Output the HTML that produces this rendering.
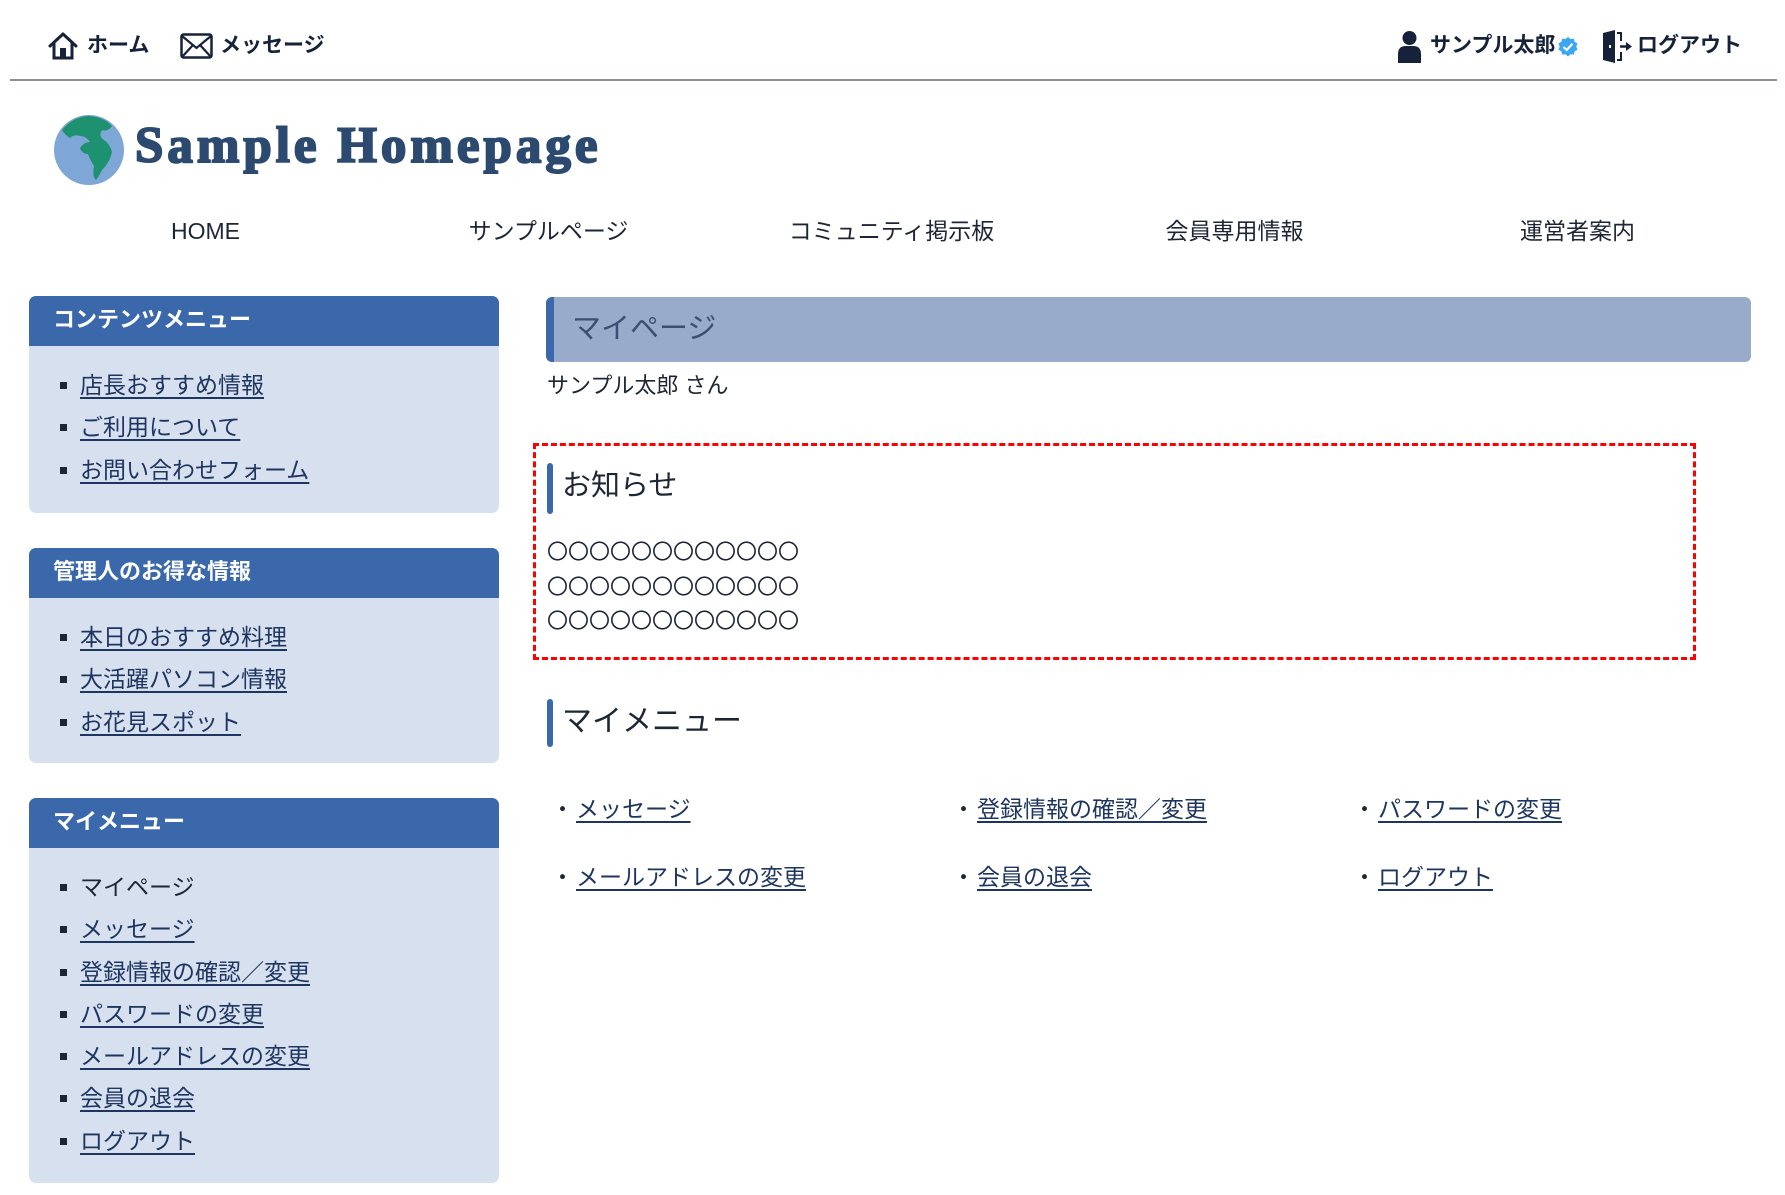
<!DOCTYPE html>
<html><head><meta charset="utf-8"><style>
*{margin:0;padding:0;box-sizing:border-box}
body{width:1785px;height:1195px;background:#fff;position:relative;overflow:hidden;font-family:"Liberation Sans","Noto Sans CJK JP",sans-serif;color:#1e2535}
.a{position:absolute;white-space:nowrap}
.tn{font-size:21px;font-weight:bold;color:#16213a;line-height:24px}
.nav{top:216px;font-size:23px;line-height:30px;width:343px;text-align:center;color:#1e2535}
.box{position:absolute;left:29px;width:470px;background:#d6e0ee;border-radius:7px;overflow:hidden}
.box .h{background:#3a68ab;color:#fff;font-weight:bold;font-size:22px;height:50px;line-height:48px;padding-left:24px}
.box ul{list-style:none;padding-top:18px}
.box li{position:relative;height:42.3px;line-height:42px;font-size:23px;padding-left:51px}
.box li:before{content:"";position:absolute;left:31px;top:18px;width:7px;height:7px;background:#1e2535}
a,.lk{color:#1e3560;text-decoration:underline;text-underline-offset:4px;text-decoration-thickness:1.5px}
.ml{font-size:23px;line-height:30px}
.ml span.d{margin-right:2px;color:#1e2535;text-decoration:none}
</style></head><body>
<svg class="a" style="left:47px;top:31px" width="32" height="30" viewBox="0 0 32 30"><path d="M3 15 L16 3 L29 15" fill="none" stroke="#16213a" stroke-width="3" stroke-linejoin="round" stroke-linecap="round"/><path d="M7 12 V27 H25 V12" fill="none" stroke="#16213a" stroke-width="3"/><rect x="13" y="17" width="6" height="10" fill="#16213a"/></svg>
<div class="a tn" style="left:87px;top:34px">ホーム</div>
<svg class="a" style="left:180px;top:33px" width="33" height="26" viewBox="0 0 33 26"><rect x="1.5" y="1.5" width="30" height="23" rx="2" fill="none" stroke="#16213a" stroke-width="2.5"/><path d="M2 3 L16.5 15 L31 3 M2 24 L13 12 M31 24 L20 12" fill="none" stroke="#16213a" stroke-width="2.2"/></svg>
<div class="a tn" style="left:220px;top:34px">メッセージ</div>
<svg class="a" style="left:1397px;top:30px" width="25" height="33" viewBox="0 0 25 33"><circle cx="12.5" cy="8" r="7" fill="#16213a"/><path d="M1 33 V24 Q1 16 9 16 H16 Q24 16 24 24 V33 Z" fill="#16213a"/></svg>
<div class="a tn" style="left:1430px;top:34px">サンプル太郎</div>
<svg class="a" style="left:1557px;top:36px" width="22" height="22" viewBox="0 0 22 22"><path d="M11 1 L13.5 3 L16.8 2.6 L17.6 5.8 L20.5 7.5 L19.3 10.6 L20.5 13.8 L17.6 15.4 L16.8 18.6 L13.5 18.2 L11 20.5 L8.5 18.2 L5.2 18.6 L4.4 15.4 L1.5 13.8 L2.7 10.6 L1.5 7.5 L4.4 5.8 L5.2 2.6 L8.5 3 Z" fill="#3aa7f0"/><path d="M6.5 11 L9.7 14 L15.5 7.8" fill="none" stroke="#fff" stroke-width="2.2"/></svg>
<svg class="a" style="left:1602px;top:30px" width="32" height="33" viewBox="0 0 32 33"><path d="M1 3 L13 0 V33 L1 30 Z" fill="#16213a"/><rect x="7" y="15" width="2" height="3" fill="#fff"/><path d="M15 3 H19 V11 M15 30 H19 V22" fill="none" stroke="#16213a" stroke-width="2"/><path d="M18 16.5 H25" stroke="#16213a" stroke-width="2.5"/><path d="M24 12 L30 16.5 L24 21 Z" fill="#16213a"/></svg>
<div class="a tn" style="left:1637px;top:34px">ログアウト</div>
<div class="a" style="left:10px;top:79px;width:1767px;height:2px;background:#8a909b"></div>
<svg class="a" style="left:52px;top:114px" width="74" height="72" viewBox="0 0 74 72"><ellipse cx="37" cy="36" rx="35" ry="35" fill="#7ea6d6"/><path d="M10 16 Q22 2 37 2 Q52 3 60 12 Q56 18 50 16 Q46 22 52 26 Q58 30 60 38 Q58 48 50 56 Q46 64 44 66 Q40 62 42 52 Q38 46 36 40 Q30 40 28 34 Q32 28 38 28 Q34 22 28 22 Q22 20 18 24 Q14 22 10 16 Z" fill="#1e9170"/></svg>
<div class="a" style="left:135px;top:116px;font-family:'Liberation Serif',serif;font-weight:bold;font-size:51px;line-height:60px;color:#2c4a70;letter-spacing:4px;-webkit-text-stroke:2px #2c4a70">Sample Homepage</div>
<div class="a nav" style="left:34px">HOME</div>
<div class="a nav" style="left:377px">サンプルページ</div>
<div class="a nav" style="left:720px">コミュニティ掲示板</div>
<div class="a nav" style="left:1063px">会員専用情報</div>
<div class="a nav" style="left:1406px">運営者案内</div>
<div class="box" style="top:296px;height:217px"><div class="h">コンテンツメニュー</div><ul>
<li><span class="lk">店長おすすめ情報</span></li><li><span class="lk">ご利用について</span></li><li><span class="lk">お問い合わせフォーム</span></li></ul></div>
<div class="box" style="top:548px;height:215px"><div class="h">管理人のお得な情報</div><ul>
<li><span class="lk">本日のおすすめ料理</span></li><li><span class="lk">大活躍パソコン情報</span></li><li><span class="lk">お花見スポット</span></li></ul></div>
<div class="box" style="top:798px;height:385px"><div class="h">マイメニュー</div><ul>
<li>マイページ</li><li><span class="lk">メッセージ</span></li><li><span class="lk">登録情報の確認／変更</span></li><li><span class="lk">パスワードの変更</span></li><li><span class="lk">メールアドレスの変更</span></li><li><span class="lk">会員の退会</span></li><li><span class="lk">ログアウト</span></li></ul></div>
<div class="a" style="left:546px;top:297px;width:1205px;height:65px;background:#98abcb;border-left:8px solid #3a68ab;border-radius:6px"></div>
<div class="a" style="left:572px;top:311px;font-size:29px;line-height:36px;color:#3b4f72">マイページ</div>
<div class="a" style="left:547px;top:371px;font-size:22px;line-height:30px">サンプル太郎 さん</div>
<div class="a" style="left:533px;top:443px;width:1163px;height:217px;border:3px dashed #ff0000"></div>
<div class="a" style="left:547px;top:463px;width:6px;height:51px;background:#3a68ab;border-radius:3px"></div>
<div class="a" style="left:562px;top:468px;font-size:29px;line-height:36px">お知らせ</div>
<div class="a" style="left:547px;top:534px;font-family:'Noto Sans CJK JP',sans-serif;font-size:21px;line-height:34.5px">〇〇〇〇〇〇〇〇〇〇〇〇<br>〇〇〇〇〇〇〇〇〇〇〇〇<br>〇〇〇〇〇〇〇〇〇〇〇〇</div>
<div class="a" style="left:547px;top:699px;width:6px;height:48px;background:#3a68ab;border-radius:3px"></div>
<div class="a" style="left:562px;top:703px;font-size:30px;line-height:38px">マイメニュー</div>
<div class="a ml" style="left:551px;top:794px"><span class="d">・</span><span class="lk">メッセージ</span></div>
<div class="a ml" style="left:952px;top:794px"><span class="d">・</span><span class="lk">登録情報の確認／変更</span></div>
<div class="a ml" style="left:1353px;top:794px"><span class="d">・</span><span class="lk">パスワードの変更</span></div>
<div class="a ml" style="left:551px;top:862px"><span class="d">・</span><span class="lk">メールアドレスの変更</span></div>
<div class="a ml" style="left:952px;top:862px"><span class="d">・</span><span class="lk">会員の退会</span></div>
<div class="a ml" style="left:1353px;top:862px"><span class="d">・</span><span class="lk">ログアウト</span></div>
</body></html>
